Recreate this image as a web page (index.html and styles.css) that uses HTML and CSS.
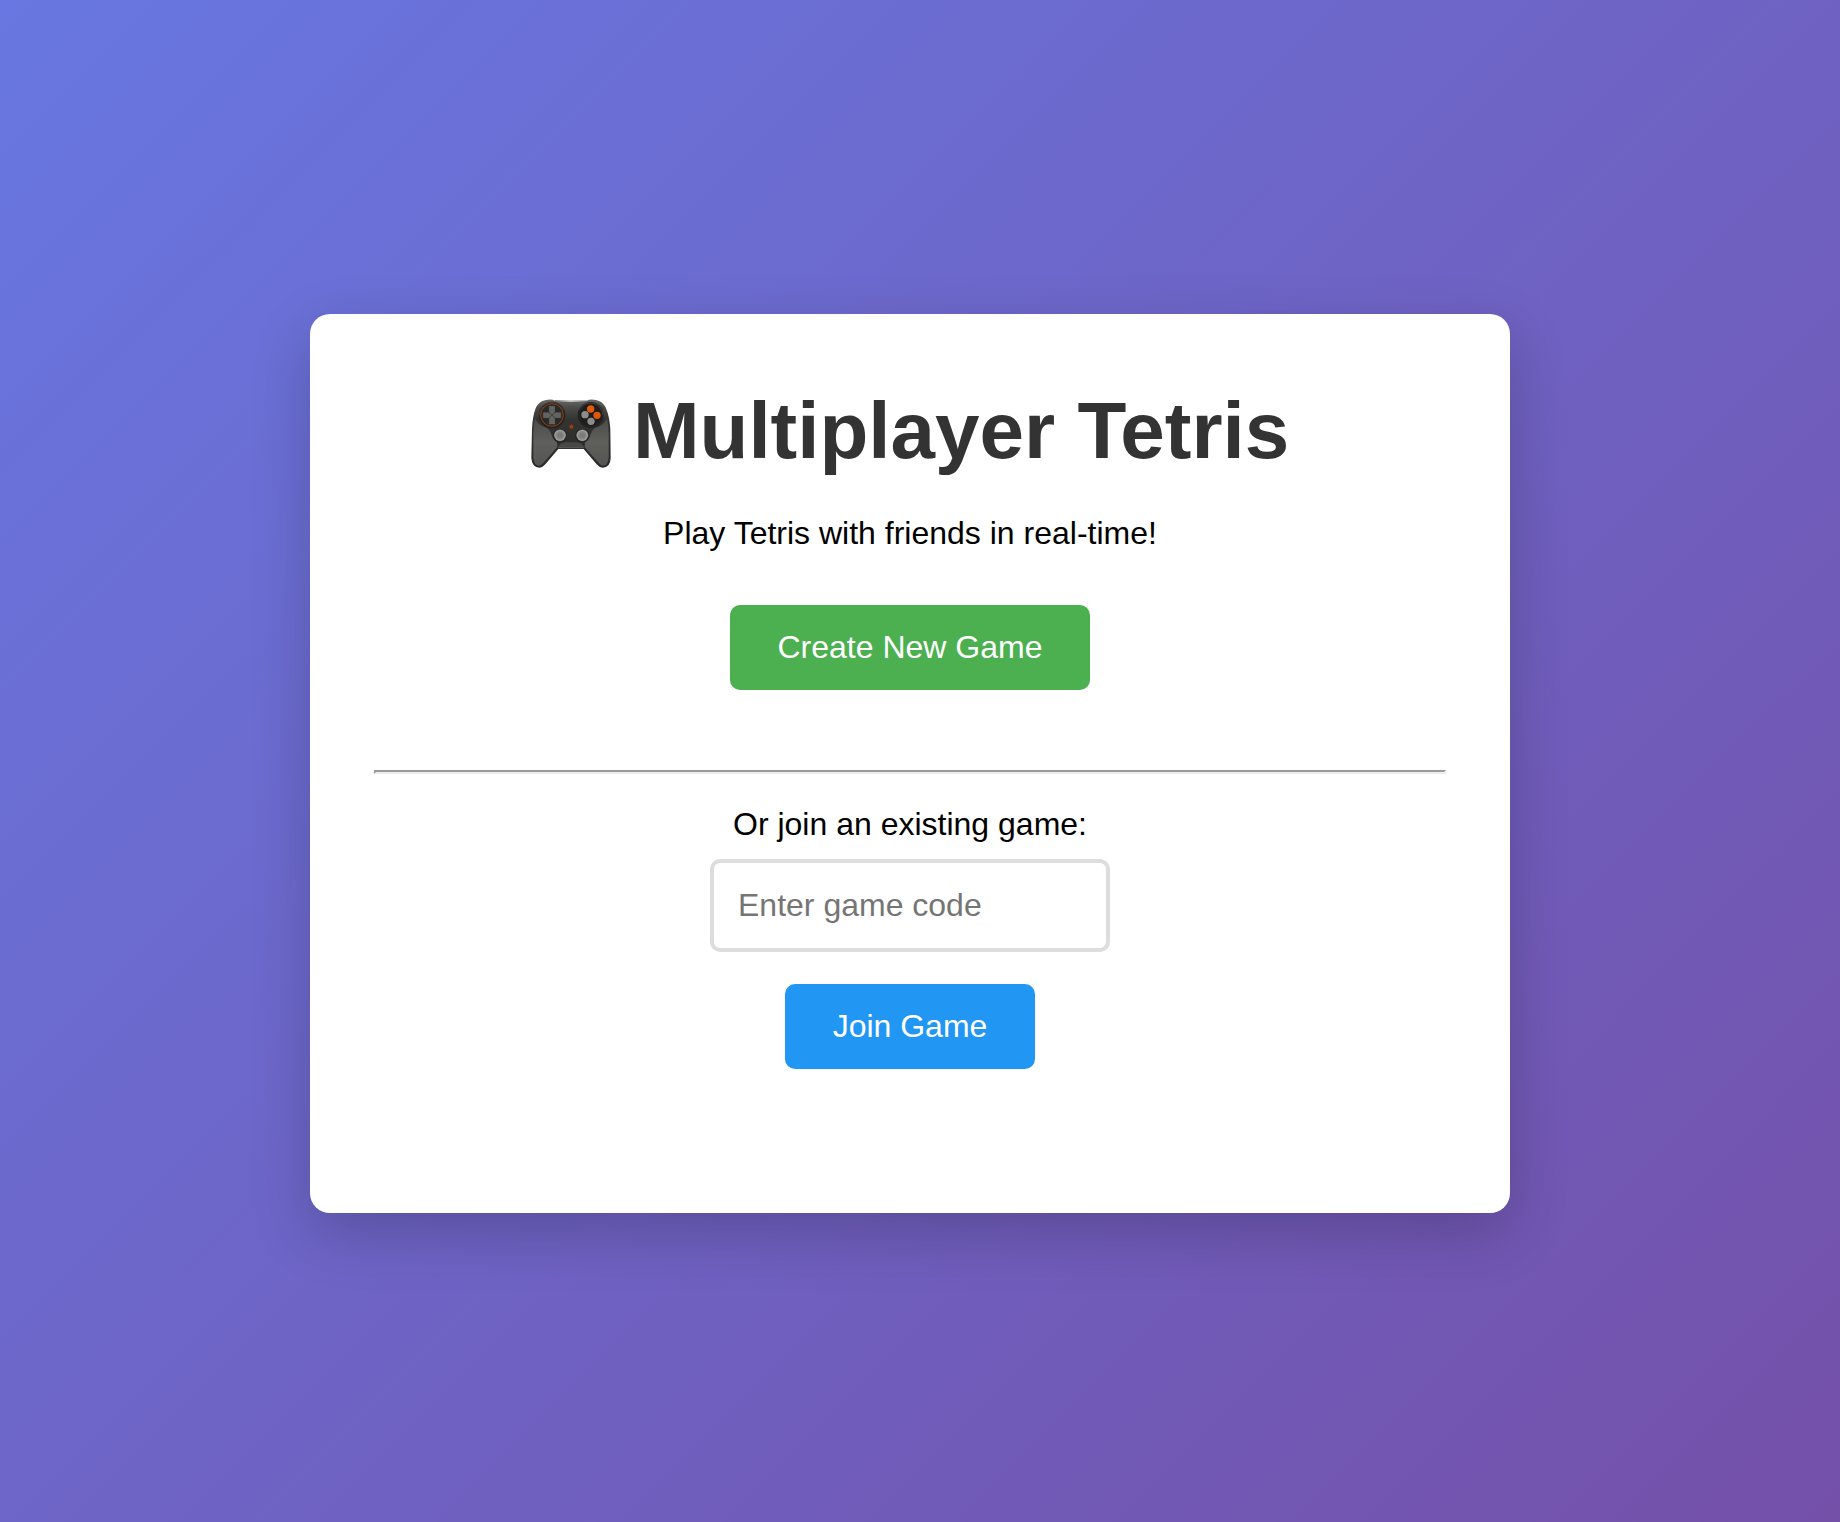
FILE: index.html
```html
<!DOCTYPE html>
<html lang="en">
<head>
  <meta charset="utf-8">
  <meta name="viewport" content="width=device-width, initial-scale=1">
  <title>Multiplayer Tetris</title>
  <link rel="stylesheet" href="styles.css">
</head>
<body>
  <main class="card">
    <h1 class="title">
      <svg class="gamepad" viewBox="48 57 240 210" aria-hidden="true">
        <defs>
          <linearGradient id="shell" x1="0" y1="0" x2="0" y2="1">
            <stop offset="0" stop-color="#6a6a68"/>
            <stop offset="0.12" stop-color="#4a4a49"/>
            <stop offset="0.3" stop-color="#333332"/>
            <stop offset="1" stop-color="#292a29"/>
          </linearGradient>
          <linearGradient id="grip" x1="0" y1="0" x2="0" y2="1">
            <stop offset="0" stop-color="#4b4c49"/>
            <stop offset="0.5" stop-color="#5f605c"/>
            <stop offset="1" stop-color="#555652"/>
          </linearGradient>
          <linearGradient id="shine" gradientUnits="userSpaceOnUse" x1="119" y1="0" x2="216" y2="0">
            <stop offset="0" stop-color="#666"/>
            <stop offset="0.5" stop-color="#d0d0ce"/>
            <stop offset="1" stop-color="#666"/>
          </linearGradient>
          <radialGradient id="stick">
            <stop offset="0" stop-color="#747472"/>
            <stop offset="0.6" stop-color="#858583"/>
            <stop offset="1" stop-color="#a6a6a4"/>
          </radialGradient>
        </defs>
        <path fill="url(#shell)" d="M82 63Q96 57 113 59L119 62H216L222 59Q241 57 254 64Q268 71 274 88Q283 108 286 148L287 234Q286 263 263 263Q253 263 245 253L206 207H130L91 253Q83 263 73 263Q51 263 49 234L51 148Q53 108 61 88Q67 70 82 63Z"/>
        <path fill="none" stroke="url(#shine)" stroke-width="4" d="M119 63L216 64"/>
        <path fill="url(#grip)" d="M60 115Q69 137 94 143Q104 147 110 165Q114 181 126 187L127 201L87 247Q79 257 72 257Q57 256 55 233L55 160Q56 131 60 115Z"/>
        <path fill="url(#grip)" d="M276 115Q267 137 242 143Q232 147 226 165Q222 181 210 187L209 201L249 247Q257 257 264 257Q279 256 281 233L281 160Q280 131 276 115Z"/>
        <path fill="#484947" d="M136 192Q145 186 154 187H182Q192 186 200 192L207 201H129Z"/>
        <path fill="none" stroke="#777874" stroke-width="2" d="M130 203H206"/>
        <circle cx="111" cy="105" r="40" fill="#222322"/>
        <circle cx="227" cy="105" r="39" fill="#222322"/>
        <path fill="none" stroke="#50504e" stroke-width="2" d="M73 105A38 38 0 0 1 146 90M192 90A38 38 0 0 1 264 105"/>
        <circle cx="111" cy="105" r="34" fill="#272a29" stroke="#9a3f0b" stroke-width="3"/>
        <path fill="#626461" stroke="#7c7e7b" stroke-width="1" d="M103 79H119V96L111 104L103 96ZM103 132H119V115L111 107L103 115ZM85 98H101L109 106L101 113H85ZM137 98H121L113 106L121 113H137Z"/>
        <circle cx="228" cy="105" r="32" fill="#1c1d1d"/>
        <circle cx="227" cy="87" r="11" fill="#e05b0b"/>
        <circle cx="246" cy="106" r="11" fill="#df5707"/>
        <circle cx="210" cy="104" r="11" fill="#8c8c8a"/>
        <circle cx="228" cy="124" r="11" fill="#8c8c8a"/>
        <circle cx="169" cy="140" r="7" fill="#6b300f"/>
        <path fill="none" stroke="#c45314" stroke-width="2" d="M166 137Q163 144 169 145Q175 144 172 137M169 135V140"/>
        <circle cx="135" cy="167" r="21" fill="#222322"/>
        <circle cx="202" cy="167" r="21" fill="#222322"/>
        <circle cx="135" cy="166" r="17" fill="url(#stick)" stroke="#a0a09e" stroke-width="1"/>
        <circle cx="202" cy="166" r="17" fill="url(#stick)" stroke="#a0a09e" stroke-width="1"/>
      </svg>
      Multiplayer Tetris
    </h1>
    <p class="text">Play Tetris with friends in real-time!</p>
    <section class="create">
      <button class="button button-create" type="button">Create New Game</button>
    </section>
    <hr class="divider">
    <form class="join">
      <label class="text" for="game-code">Or join an existing game:</label>
      <input class="code" id="game-code" type="text" placeholder="Enter game code">
      <button class="button button-join" type="button">Join Game</button>
    </form>
  </main>
</body>
</html>
```
FILE: styles.css
```css
* {
  box-sizing: border-box;
}

body {
  display: flex;
  align-items: center;
  justify-content: center;
  min-height: 100vh;
  margin: 0;
  padding: 4px 20px 0 0;
  background: linear-gradient(135deg, #6877e1 0%, #7450a9 100%);
  color: #000;
  font-family: Arial, "Liberation Sans", sans-serif;
  font-size: 32px;
  line-height: 37px;
}

.card {
  width: 100%;
  max-width: 1200px;
  padding: 64px;
  border-radius: 20px;
  background: #fff;
  box-shadow: 0 20px 60px rgba(0, 0, 0, 0.2);
  text-align: center;
}

.title {
  margin: 0 0 32px;
  color: #333;
  font-size: 80px;
  line-height: 105px;
}

.gamepad {
  width: 80px;
  height: 70px;
  vertical-align: -11px;
}

.text {
  margin: 0;
}

.create {
  display: flex;
  justify-content: center;
  padding: 53px 0 80px;
}

.divider {
  margin: 0;
  border: 2px solid;
  border-color: #9a9a9a #eee #eee #9a9a9a;
}

.join {
  display: flex;
  flex-direction: column;
  align-items: center;
  padding: 32px 0 80px;
}

.code {
  width: 400px;
  max-width: 100%;
  margin: 16px 0 32px;
  padding: 24px;
  border: 4px solid #ddd;
  border-radius: 10px;
  background: #fff;
  font: inherit;
}

.code::placeholder {
  color: #757575;
}

.button {
  padding: 24px 48px;
  border: 0;
  border-radius: 10px;
  color: #fff;
  font: inherit;
  cursor: pointer;
}

.button-create {
  background: #4caf50;
}

.button-join {
  background: #2196f3;
}
```
